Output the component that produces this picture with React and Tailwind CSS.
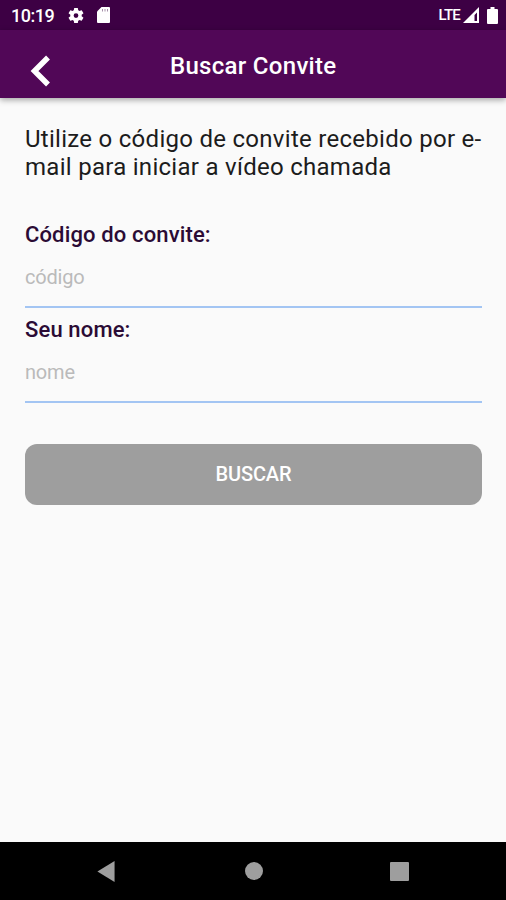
import React from "react";

function StatusBar() {
  return (
    <div className="flex h-[30px] shrink-0 items-center bg-[#3d0044] text-white">
      <span className="ml-[11px] mt-0.5 w-[58px] text-[18px] leading-[30px] font-medium tracking-[-0.5px]">
        10:19
      </span>
      <svg className="-ml-[3px] mt-px h-[19px] w-[20px]" viewBox="0 0 24 24" fill="currentColor">
        <path d="M19.14 12.94c.04-.3.06-.61.06-.94s-.02-.64-.07-.94l2.03-1.58a.49.49 0 0 0 .12-.61l-1.92-3.32a.49.49 0 0 0-.59-.22l-2.39.96a7 7 0 0 0-1.62-.94l-.36-2.54a.48.48 0 0 0-.48-.41h-3.84a.48.48 0 0 0-.47.41l-.36 2.54c-.59.24-1.13.57-1.62.94l-2.39-.96a.48.48 0 0 0-.59.22L2.74 8.87a.48.48 0 0 0 .12.61l2.03 1.58c-.05.3-.09.63-.09.94s.02.64.07.94l-2.03 1.58a.49.49 0 0 0-.12.61l1.92 3.32c.12.22.37.29.59.22l2.39-.96c.5.38 1.03.7 1.62.94l.36 2.54c.05.24.24.41.48.41h3.84c.24 0 .44-.17.47-.41l.36-2.54a7 7 0 0 0 1.62-.94l2.39.96c.22.08.47 0 .59-.22l1.92-3.32a.48.48 0 0 0-.12-.61zM12 15a3 3 0 1 1 0-6 3 3 0 0 1 0 6z" />
      </svg>
      <svg className="ml-[11px] h-4 w-[13px]" viewBox="0 0 13 16">
        <path
          fill="currentColor"
          d="M4.5 0H12a1 1 0 0 1 1 1v14a1 1 0 0 1-1 1H1a1 1 0 0 1-1-1V4.5z"
        />
        <path stroke="#a58fa9" strokeWidth="1" d="M5.5 2v2.5M8 2v2.5M10.5 2v2.5" />
      </svg>
      <span className="ml-auto text-[15px] leading-[30px] font-medium tracking-[-0.8px]">
        LTE
      </span>
      <svg className="ml-[3px] h-4 w-4" viewBox="0 0 16 16">
        <path
          fill="currentColor"
          fillRule="evenodd"
          d="M16 0v16H0zM14 5.5L11.5 8v6H14z"
        />
      </svg>
      <svg className="ml-2 mr-2 h-[17px] w-[11px]" viewBox="0 0 11 17">
        <path
          fill="currentColor"
          d="M3.5 0h4v2H10a1 1 0 0 1 1 1v13a1 1 0 0 1-1 1H1a1 1 0 0 1-1-1V3a1 1 0 0 1 1-1h2.5z"
        />
      </svg>
    </div>
  );
}

function Header() {
  return (
    <header className="relative z-10 flex h-[68px] shrink-0 items-center bg-[#510757] shadow-[0_2px_6px_rgba(0,0,0,0.35)]">
      <svg
        className="ml-[30px] mt-[13px] h-[32px] w-[20px]"
        viewBox="0 0 20 32"
        fill="none"
        stroke="white"
        strokeWidth="5.5"
      >
        <path d="M18 2.5L4.5 16 18 29.5" />
      </svg>
      <h1 className="ml-[120px] mt-[3px] whitespace-nowrap text-[24px] font-medium tracking-[0.3px] text-white">
        Buscar Convite
      </h1>
    </header>
  );
}

function Field({ label, placeholder }) {
  return (
    <div className="flex h-[95px] flex-col border-b-2 border-[#a3c5f3]">
      <label className="mt-2 whitespace-nowrap text-[22px] leading-[28px] font-medium tracking-[0.14px] text-[#2b0b35]">
        {label}
      </label>
      <span className="mt-[15px] text-[20px] leading-[26px] tracking-[-0.2px] text-[#bababa]">
        {placeholder}
      </span>
    </div>
  );
}

function NavBar() {
  return (
    <nav className="flex h-[58px] shrink-0 items-center bg-black text-[#9e9e9e]">
      <svg className="ml-[97px] h-[21px] w-[18px]" viewBox="0 0 18 22" fill="currentColor">
        <path d="M18 0v22L0 11z" />
      </svg>
      <div className="ml-[130px] h-[18px] w-[18px] rounded-full bg-[#9e9e9e]" />
      <div className="ml-[127px] h-[19px] w-[19px] rounded-[1px] bg-[#9e9e9e]" />
    </nav>
  );
}

function App() {
  return (
    <div className="flex h-screen w-full flex-col overflow-hidden bg-[#fafafa] font-['Roboto',sans-serif]">
      <StatusBar />
      <Header />
      <main className="flex flex-1 flex-col px-[25px]">
        <p className="mt-[27px] whitespace-nowrap text-[24px] leading-[28px] tracking-[0.28px] text-[#1c1c1c]">
          Utilize o código de convite recebido por e-
          <br />
          mail para iniciar a vídeo chamada
        </p>
        <div className="mt-[32px] w-[457px]">
          <Field label="Código do convite:" placeholder="código" />
          <Field label="Seu nome:" placeholder="nome" />
        </div>
        <button className="mt-[41px] h-[61px] w-[457px] rounded-[12px] bg-[#9e9e9e] pb-0.5 text-[20px] font-medium tracking-[-0.15px] text-white">
          BUSCAR
        </button>
      </main>
      <NavBar />
    </div>
  );
}

export default App;
